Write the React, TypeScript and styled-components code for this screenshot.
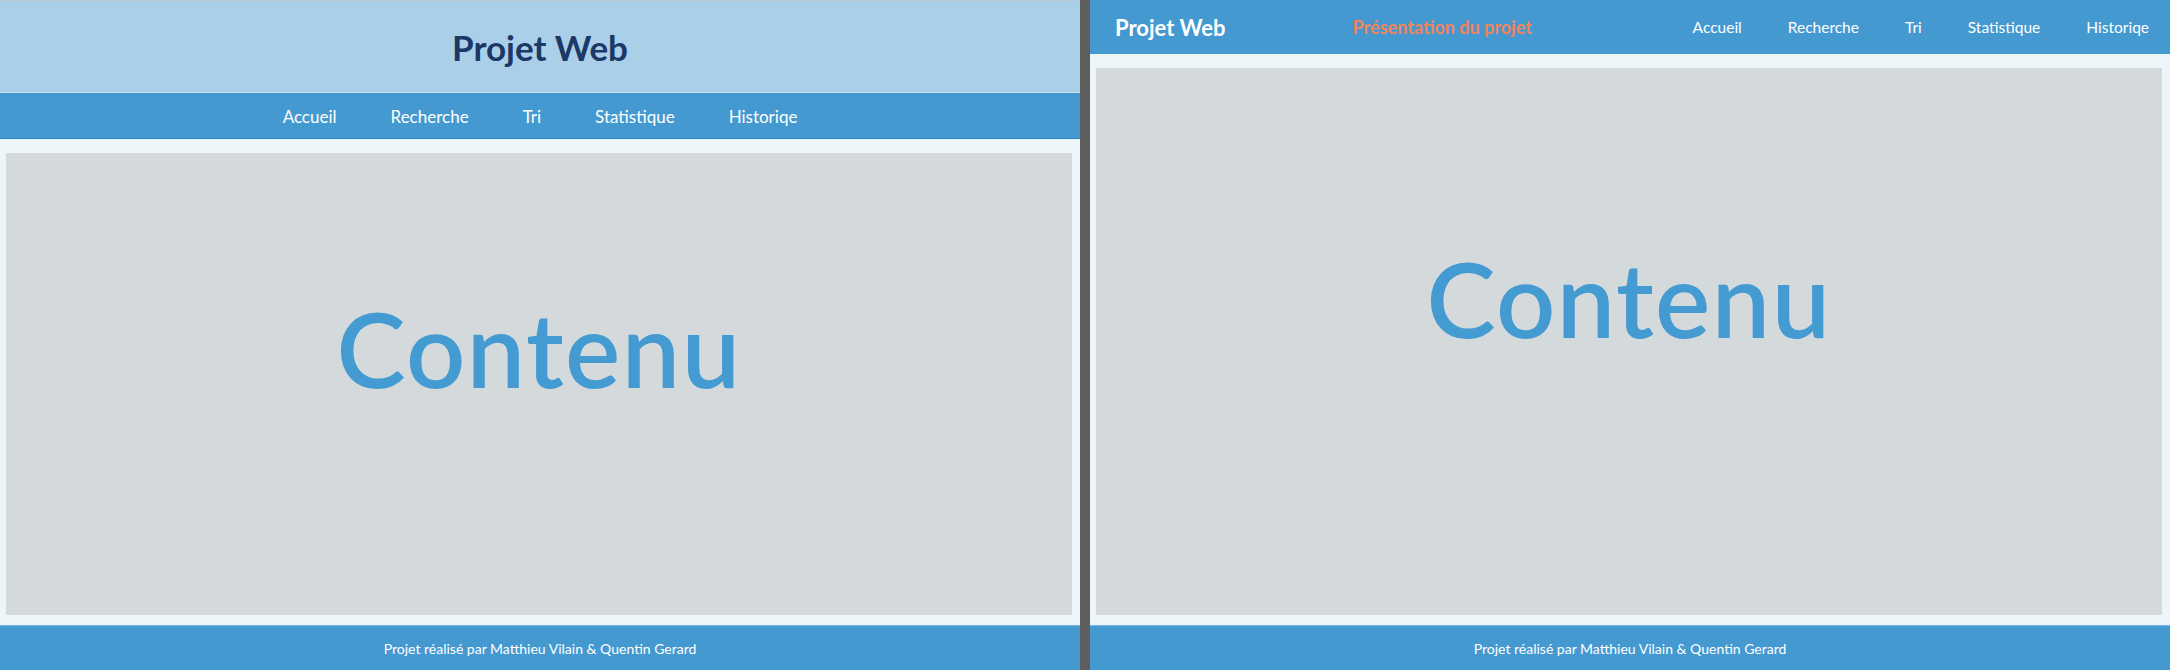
import styled, { createGlobalStyle } from 'styled-components'

const GlobalStyle = createGlobalStyle`
  html, body {
    margin: 0;
    padding: 0;
    background: #5e5e5e;
  }
  body {
    font-family: Lato, 'Liberation Sans', sans-serif;
  }
`

const NAV_ITEMS = ['Accueil', 'Recherche', 'Tri', 'Statistique', 'Historiqe']
const CREDITS = 'Projet réalisé par Matthieu Vilain & Quentin Gerard'

const Screen = styled.div`
  display: flex;
  gap: 10px;
  width: 2170px;
  height: 670px;
  background: #5e5e5e;
`

const Panel = styled.div`
  display: flex;
  flex-direction: column;
  width: 1080px;
  height: 670px;
  background: #eef5f9;
`

const Banner = styled.header`
  display: flex;
  align-items: center;
  justify-content: center;
  height: 91px;
  background: #aacfe9;
  border-top: 1px solid #b9c6d0;
  border-bottom: 1px solid #c3def0;
`

const BannerTitle = styled.h1`
  margin: 0;
  font-size: 35px;
  font-weight: 700;
  color: #1b3867;
`

const NavBar = styled.nav`
  display: flex;
  align-items: center;
  justify-content: center;
  gap: 54px;
  height: 43px;
  padding-top: 2px;
  background: #4499d1;
  border-bottom: 1px solid #2c87c6;
`

const NavLink = styled.span<{ compact?: boolean }>`
  font-size: ${({ compact }) => (compact ? '15.5px' : '17px')};
  color: #ffffff;
  cursor: pointer;
`

const TopBar = styled.header`
  display: flex;
  align-items: center;
  height: 54px;
  padding: 0 21px 0 25px;
  background: #4499d1;
`

const Brand = styled.span`
  font-size: 22px;
  font-weight: 700;
  color: #ffffff;
`

const Tagline = styled.span`
  margin-left: 127px;
  font-size: 18px;
  font-weight: 700;
  color: #f2845c;
`

const TopNav = styled.div`
  display: flex;
  align-items: center;
  gap: 46px;
  margin-left: auto;
`

const Main = styled.main<{ lift: number }>`
  flex: 1;
  display: flex;
  align-items: center;
  justify-content: center;
  margin: 14px 8px 10px 6px;
  padding-bottom: ${({ lift }) => lift}px;
  background: #d4d9dc;
`

const Placeholder = styled.span`
  font-size: 104px;
  font-weight: 600;
  color: #449bd2;
  letter-spacing: 1.5px;
`

const Footer = styled.footer`
  display: flex;
  align-items: center;
  justify-content: center;
  height: 44px;
  background: #4499d1;
  border-top: 1px solid #76b6e0;
`

const Credits = styled.span`
  font-size: 14px;
  color: #ffffff;
`

function PageFooter() {
  return (
    <Footer>
      <Credits>{CREDITS}</Credits>
    </Footer>
  )
}

export default function App() {
  return (
    <>
      <GlobalStyle />
      <Screen>
        <Panel>
          <Banner>
            <BannerTitle>Projet Web</BannerTitle>
          </Banner>
          <NavBar>
            {NAV_ITEMS.map((item) => (
              <NavLink key={item}>{item}</NavLink>
            ))}
          </NavBar>
          <Main lift={74}>
            <Placeholder>Contenu</Placeholder>
          </Main>
          <PageFooter />
        </Panel>
        <Panel>
          <TopBar>
            <Brand>Projet Web</Brand>
            <Tagline>Présentation du projet</Tagline>
            <TopNav>
              {NAV_ITEMS.map((item) => (
                <NavLink key={item} compact>
                  {item}
                </NavLink>
              ))}
            </TopNav>
          </TopBar>
          <Main lift={88}>
            <Placeholder>Contenu</Placeholder>
          </Main>
          <PageFooter />
        </Panel>
      </Screen>
    </>
  )
}
